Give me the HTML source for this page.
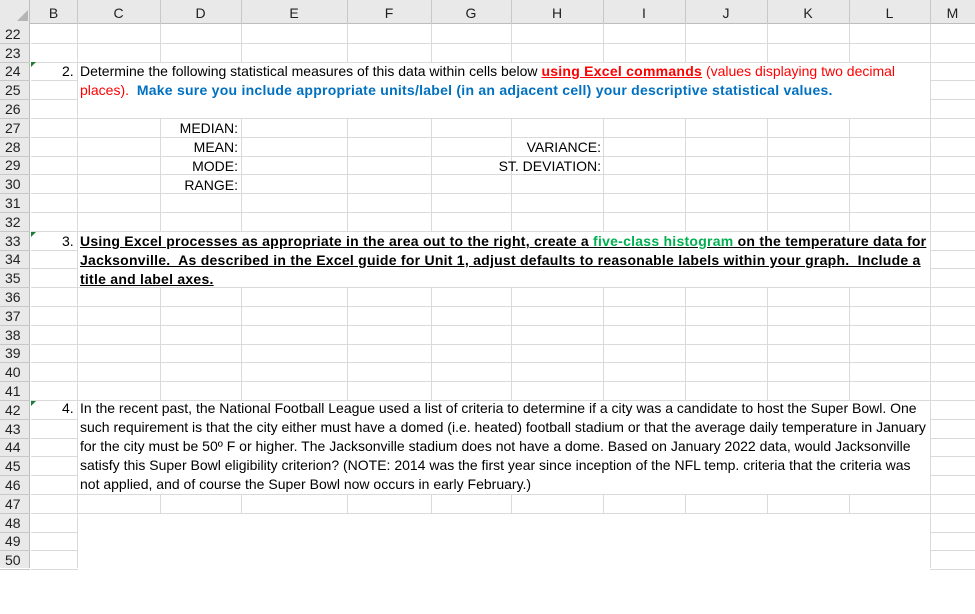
<!DOCTYPE html>
<html><head><meta charset="utf-8"><style>
*{margin:0;padding:0;box-sizing:border-box}
body{width:975px;height:568px;overflow:hidden;background:#fff;font-family:"Liberation Sans",Arial,sans-serif;position:relative}
.a{position:absolute}
.hl{position:absolute;height:1px;background:#dadada}
.vl{position:absolute;width:1px;background:#dadada}
.ch{position:absolute;top:0;height:24px;line-height:26px;text-align:center;font-size:14px;color:#222}
.rh{position:absolute;left:0;width:30px;font-size:14px;color:#222;padding-left:5px}
.t{position:absolute;font-size:14px;color:#000;white-space:nowrap}
.b{font-weight:bold;letter-spacing:0.25px}
.w{position:absolute;background:#fff}
.tri{position:absolute;width:0;height:0;border-top:5px solid #1e7b34;border-right:5px solid transparent}
</style></head><body>
<div id="g"></div>
<script>
(function(){
var cols=[30,77,160,241,347,431,511,603,685,767,849,930,975];
var names=["B","C","D","E","F","G","H","I","J","K","L","M"];
var h="";
h+='<div class="a" style="left:0;top:0;width:975px;height:24px;background:#e9e9e9;border-bottom:1px solid #bdbdbd"></div>';
h+='<div class="a" style="left:0;top:0;width:30px;height:568px;background:#e9e9e9;border-right:1px solid #bdbdbd"></div>';
h+='<div class="a" style="left:17px;top:10px;width:0;height:0;border-bottom:11px solid #b5b5b5;border-left:11px solid transparent"></div>';
for(var i=0;i<names.length;i++){h+='<div class="ch" style="left:'+cols[i]+'px;width:'+(cols[i+1]-cols[i])+'px">'+names[i]+'</div>';
 h+='<div class="vl" style="left:'+cols[i+1]+'px;top:0;height:24px;background:#c8c8c8"></div>';}
for(var i=1;i<cols.length-1;i++){h+='<div class="vl" style="left:'+cols[i]+'px;top:24px;height:544px"></div>';}
function y(r){return Math.round(24+(r-22)*18.8);}
for(var r=22;r<=50;r++){var ty=y(r),by=y(r+1);
 h+='<div class="hl" style="left:31px;top:'+by+'px;width:944px"></div>';
 h+='<div class="hl" style="left:0;top:'+by+'px;width:30px;background:#c8c8c8"></div>';
 h+='<div class="rh" style="top:'+ty+'px;height:'+(by-ty)+'px;line-height:'+(by-ty+1)+'px">'+r+'</div>';}
function white(r1,r2){h+='<div class="w" style="left:78px;top:'+(y(r1)+1)+'px;width:852px;height:'+(y(r2+1)-y(r1)-1)+'px"></div>';}
white(24,26);white(33,35);white(42,46);
h+='<div class="w" style="left:78px;top:'+(y(48)+1)+'px;width:852px;height:100px"></div>';
document.getElementById("g").innerHTML=h;
})();
</script>
<div class="tri" style="left:31px;top:62px"></div>
<div class="tri" style="left:31px;top:232px"></div>
<div class="tri" style="left:31px;top:401px"></div>

<div class="t" style="left:62px;top:63px">2.</div>
<div class="t" style="left:80px;top:63px">Determine the following statistical measures of this data within cells below <span class="b" style="color:#ff0000;text-decoration:underline">using Excel commands</span> <span style="color:#ff0000">(values displaying two decimal</span></div>
<div class="t" style="left:80px;top:82px"><span style="color:#ff0000">places).</span>&nbsp; <span class="b" style="color:#0070c0">Make sure you include appropriate units/label (in an adjacent cell) your descriptive statistical values.</span></div>

<div class="t" style="left:100px;width:138px;text-align:right;top:120px">MEDIAN:</div>
<div class="t" style="left:100px;width:138px;text-align:right;top:139px">MEAN:</div>
<div class="t" style="left:100px;width:138px;text-align:right;top:158px">MODE:</div>
<div class="t" style="left:100px;width:138px;text-align:right;top:177px">RANGE:</div>
<div class="t" style="left:400px;width:201px;text-align:right;top:139px">VARIANCE:</div>
<div class="t" style="left:400px;width:201px;text-align:right;top:158px">ST. DEVIATION:</div>

<div class="t" style="left:62px;top:233px">3.</div>
<div class="t b" style="left:80px;top:233px;text-decoration:underline">Using Excel processes as appropriate in the area out to the right, create a <span style="color:#00b050">five-class histogram</span> on the temperature data for </div>
<div class="t b" style="left:80px;top:252px;text-decoration:underline">Jacksonville.&nbsp; As described in the Excel guide for Unit 1, adjust defaults to reasonable labels within your graph.&nbsp; Include a </div>
<div class="t b" style="left:80px;top:271px;text-decoration:underline">title and label axes.</div>

<div class="t" style="left:62px;top:400px">4.</div>
<div class="t" style="left:80px;top:400px">In the recent past, the National Football League used a list of criteria to determine if a city was a candidate to host the Super Bowl. One</div>
<div class="t" style="left:80px;top:419px">such requirement is that the city either must have a domed (i.e. heated) football stadium or that the average daily temperature in January</div>
<div class="t" style="left:80px;top:438px">for the city must be 50º F or higher. The Jacksonville stadium does not have a dome. Based on January 2022 data, would Jacksonville</div>
<div class="t" style="left:80px;top:457px">satisfy this Super Bowl eligibility criterion? (NOTE: 2014 was the first year since inception of the NFL temp. criteria that the criteria was</div>
<div class="t" style="left:80px;top:476px">not applied, and of course the Super Bowl now occurs in early February.)</div>
</body></html>
